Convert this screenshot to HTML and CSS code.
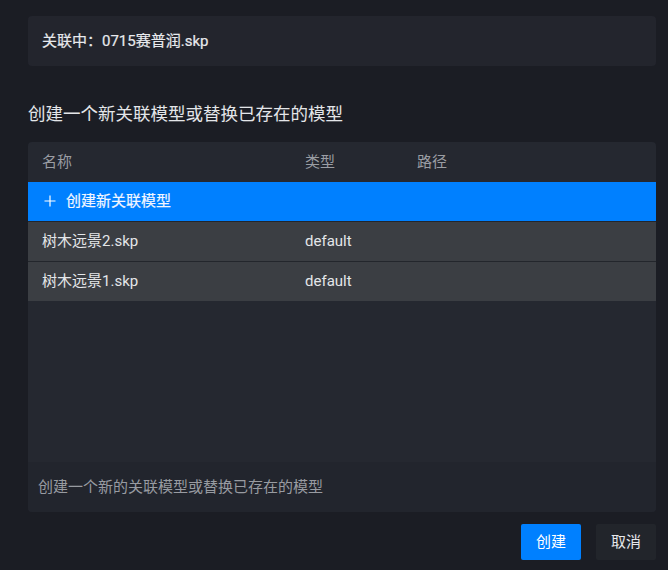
FILE: index.html
```html
<!DOCTYPE html>
<html lang="zh">
<head>
<meta charset="utf-8">
<link rel="stylesheet" href="styles.css">
</head>
<body>
<div class="dialog">
  <div class="linked"><span class="t">关联中：0715赛普润.skp</span></div>
  <div class="heading">创建一个新关联模型或替换已存在的模型</div>
  <div class="table">
    <div class="row head">
      <div class="c name">名称</div>
      <div class="c type">类型</div>
      <div class="c path">路径</div>
    </div>
    <div class="row create">
      <svg class="plus" width="12" height="12" viewBox="0 0 12 12"><path d="M6 0.5V11.5M0.5 6H11.5" stroke="#fff" stroke-width="1.2" fill="none"/></svg>
      <span>创建新关联模型</span>
    </div>
    <div class="row item">
      <div class="c name">树木远景2.skp</div>
      <div class="c type">default</div>
      <div class="c path"></div>
    </div>
    <div class="row item">
      <div class="c name">树木远景1.skp</div>
      <div class="c type">default</div>
      <div class="c path"></div>
    </div>
    <div class="fill"></div>
    <div class="foot">创建一个新的关联模型或替换已存在的模型</div>
  </div>
  <div class="actions">
    <button class="btn primary">创建</button>
    <button class="btn">取消</button>
  </div>
</div>
</body>
</html>
```
FILE: styles.css
```css
html, body {
  margin: 0;
  padding: 0;
  background: #1b1d24;
  width: 668px;
  height: 570px;
  overflow: hidden;
}
body {
  font-family: "Roboto", "Noto Sans CJK SC", sans-serif;
  font-size: 15px;
  line-height: 20px;
  color: #e6e8eb;
}
.dialog {
  padding: 16px 12px 0 28px;
  display: flex;
  flex-direction: column;
}
.linked {
  height: 50px;
  box-sizing: border-box;
  padding-bottom: 1px;
  background: #23252d;
  border-radius: 4px;
  display: flex;
  align-items: center;
  padding-left: 14px;
  color: #e8eaed;
  -webkit-text-stroke: 0.2px #e8eaed;
}
.heading {
  margin-top: 37px;
  height: 24px;
  line-height: 22px;
  font-size: 17.5px;
  color: #e4e6e9;
}
.table {
  margin-top: 15px;
  height: 370px;
  background: #252830;
  border-radius: 4px;
  display: flex;
  flex-direction: column;
  overflow: hidden;
}
.row {
  display: flex;
  align-items: center;
  padding-left: 14px;
  flex: none;
  box-sizing: border-box;
  padding-bottom: 1px;
}
.row .c.name { width: 263px; }
.row .c.type { width: 112px; }
.head {
  height: 40px;
  color: #9a9da3;
}
.create {
  height: 39px;
  background: #0080ff;
  color: #f2f6ff;
  -webkit-text-stroke: 0.2px #f2f6ff;
}
.plus {
  margin-right: 10px;
  margin-left: 2px;
}
.item {
  height: 40px;
  border-top: 1px solid #23262c;
  background: #3b3e43;
  color: #e4e6e9;
}
.fill { flex: 1; }
.foot {
  height: 50px;
  box-sizing: border-box;
  padding-bottom: 1px;
  background: #22252d;
  display: flex;
  align-items: center;
  padding-left: 10px;
  color: #989ba1;
  border-radius: 0 0 4px 4px;
}
.actions {
  margin-top: 12px;
  display: flex;
  justify-content: flex-end;
  gap: 15px;
}
.btn {
  width: 60px;
  height: 36px;
  border: none;
  border-radius: 2px;
  background: #22252b;
  color: #e6e8eb;
  font-family: inherit;
  font-size: 15px;
  line-height: 20px;
  padding: 0 0 1px 0;
}
.btn.primary {
  background: #0080ff;
  color: #fff;
}
```
